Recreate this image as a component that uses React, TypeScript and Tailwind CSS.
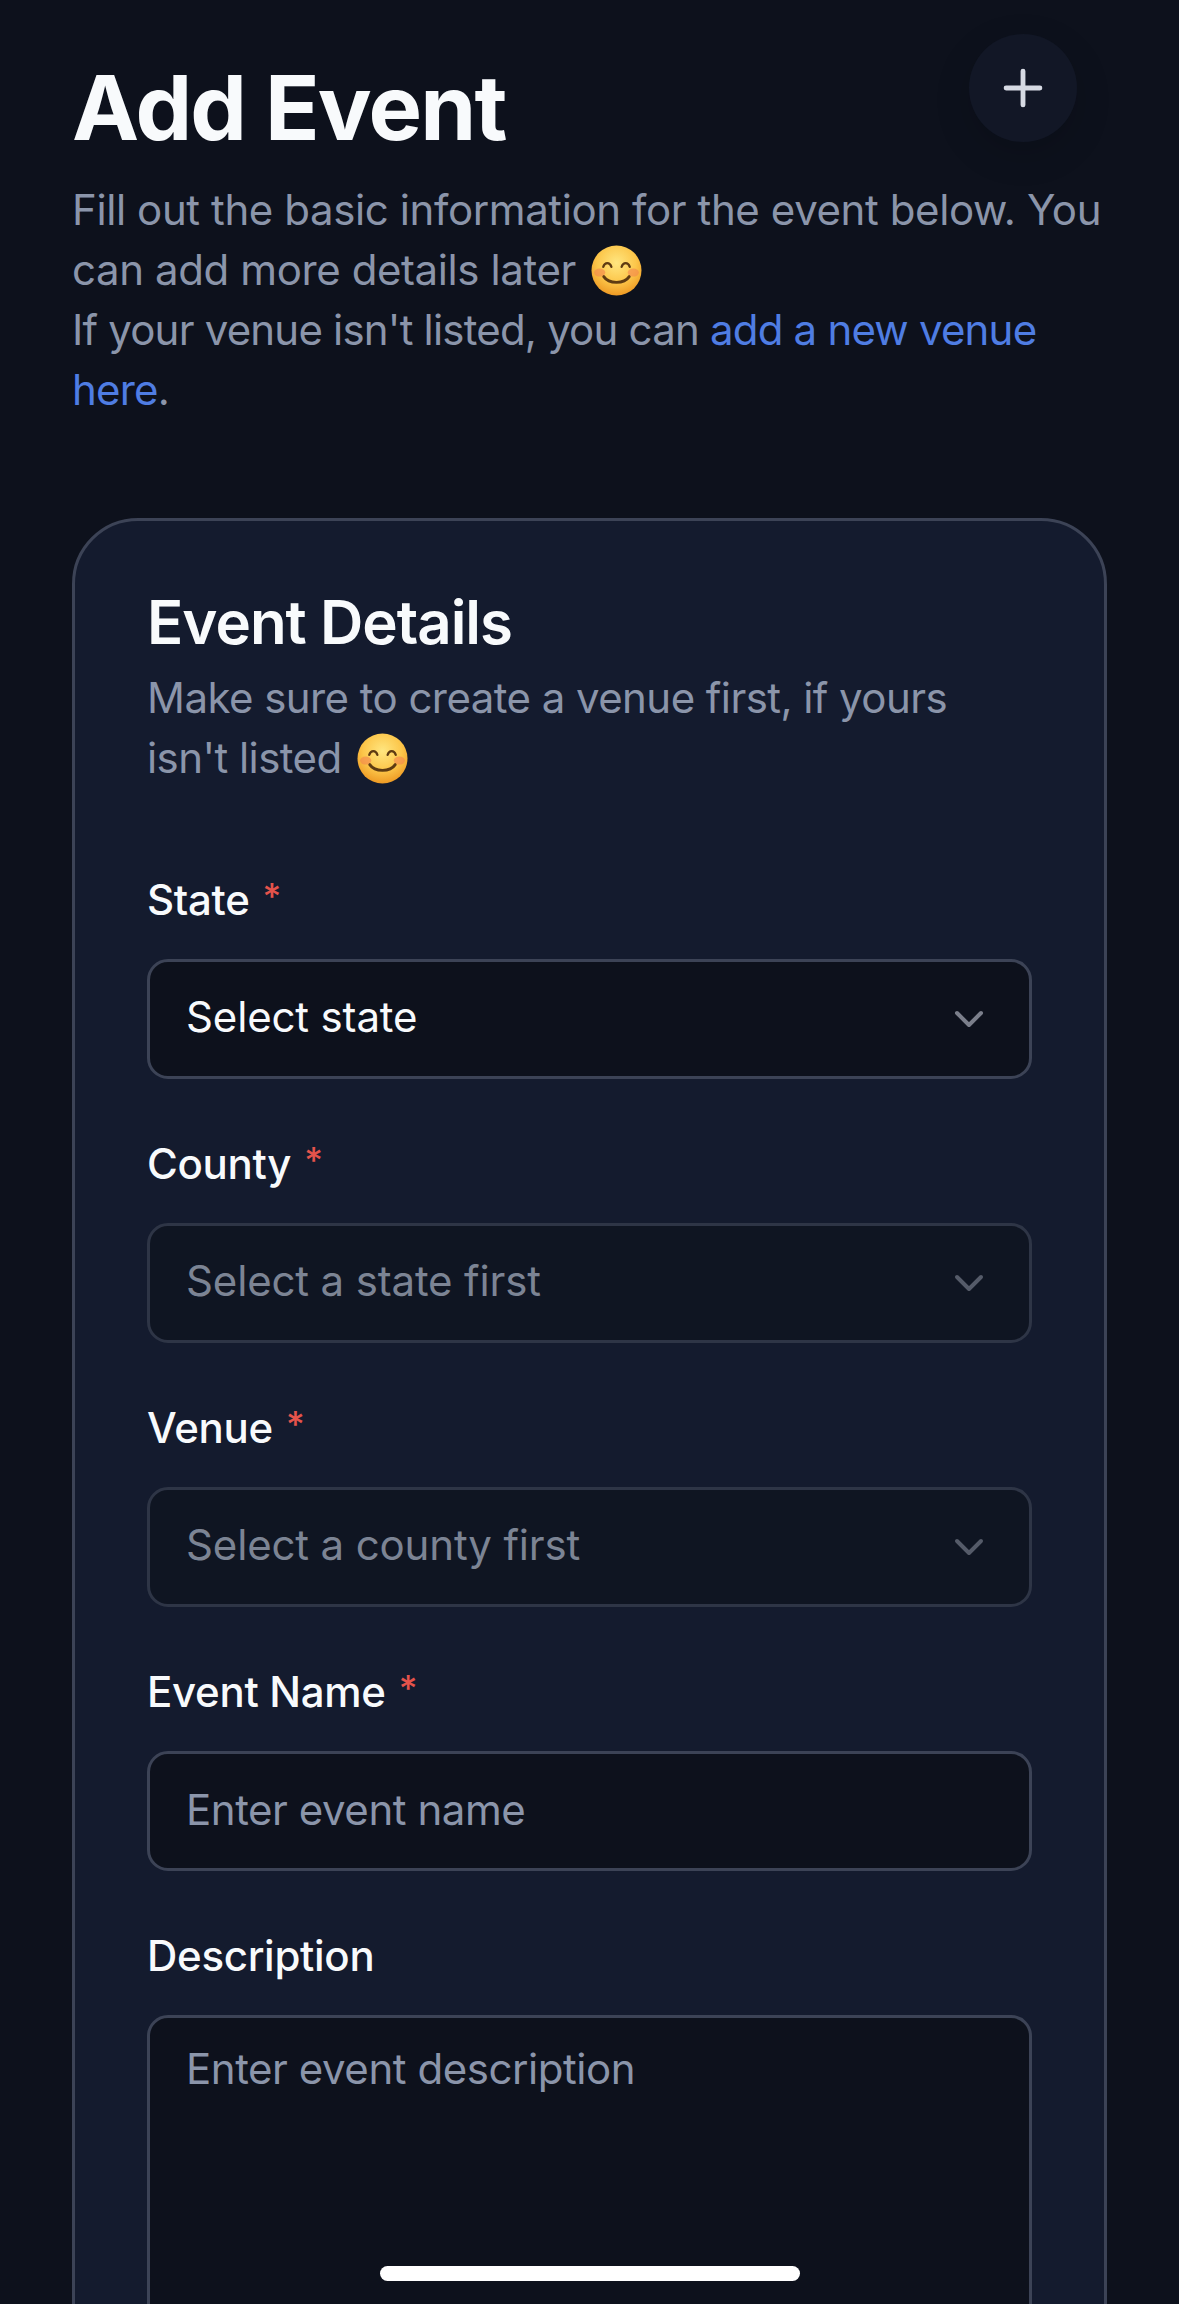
import React from 'react';
import { ChevronDown, Plus } from 'lucide-react';

const Smile: React.FC<{ id: string }> = ({ id }) => (
  <svg viewBox="0 0 50 50" className="ml-[4px] inline-block h-[51px] w-[51px] align-[-11px]">
    <defs>
      <radialGradient id={`${id}-face`} cx="50%" cy="35%" r="65%">
        <stop offset="0%" stopColor="#ffe680" />
        <stop offset="60%" stopColor="#fcc64a" />
        <stop offset="100%" stopColor="#ee9a24" />
      </radialGradient>
    </defs>
    <circle cx="25" cy="25" r="24.5" fill={`url(#${id}-face)`} />
    <ellipse cx="8.500" cy="27" rx="5.500" ry="4" fill="#f4854f" opacity="0.6" />
    <ellipse cx="41.500" cy="27" rx="5.500" ry="4" fill="#f4854f" opacity="0.6" />
    <path d="M12 21.500c1.500-5 6.500-5 8 0M30 21.500c1.500-5 6.500-5 8 0" fill="none" stroke="#5e3b12" strokeWidth="2.200" strokeLinecap="round" />
    <path d="M12.500 31c5 7.500 20 7.500 25 0" fill="none" stroke="#5e3b12" strokeWidth="2.800" strokeLinecap="round" />
  </svg>
);

const Label: React.FC<{ text: string; required?: boolean }> = ({ text, required }) => (
  <label className="block h-[60px] pt-[2px] text-[42px] leading-[60px] font-medium tracking-[-0.3px] text-[#f8fafc]">
    {text}
    {required && <span className="ml-[13px] align-[6px] text-[36px] leading-none text-[#e5534b]">*</span>}
  </label>
);

const SelectField: React.FC<{ label: string; value: string; disabled?: boolean }> = ({ label, value, disabled }) => (
  <div className="flex flex-col gap-[31px]">
    <Label text={label} required />
    <button
      type="button"
      className={`flex h-[120px] w-full items-center justify-between rounded-[21px] border-[3px] px-9 text-[42px] tracking-[-0.15px] ${
        disabled ? 'border-[#2e3546] bg-[#0f1522] text-[#7c8494]' : 'border-[#3c4356] bg-[#0d111c] text-[#f8fafc]'
      }`}
    >
      <span className="pb-[6px]">{value}</span>
      <ChevronDown size={48} className={disabled ? 'text-[#555b69]' : 'text-[#7b7f8b]'} />
    </button>
  </div>
);

export default function App() {
  return (
    <div className="relative h-[2304px] w-[1179px] overflow-hidden bg-[#0d111c] font-['Inter',sans-serif]">
      <div className="px-[72px] pt-[54px]">
        <h1 className="text-[90px] leading-[108px] font-bold tracking-[-1.75px] text-[#f8fafc]">Add Event</h1>
        <p className="mt-[18px] text-[42px] leading-[60px] text-[#8b95aa]">
          <span className="tracking-[-0.4px]">
            Fill out the basic information for the event below. You can add more details later <Smile id="a" />
          </span>
          <br />
          <span className="tracking-[-0.8px]">
            If your venue isn't listed, you can <span className="text-[#4f7de3]">add a new venue here</span>.
          </span>
        </p>

        <div className="mt-[98px] rounded-[66px] border-[3px] border-[#3c4356] bg-[#141b2e] p-[72px]">
          <h2 className="pb-[2px] text-[60px] leading-[58px] font-semibold tracking-[-1px] text-[#f8fafc]">Event Details</h2>
          <p className="mt-[15px] text-[42px] leading-[60px] tracking-[-0.56px] text-[#8b95aa]">
            Make sure to create a venue first, if yours isn't listed <Smile id="b" />
          </p>

          <div className="mt-[80px] flex flex-col gap-[53px]">
            <SelectField label="State" value="Select state" />
            <SelectField label="County" value="Select a state first" disabled />
            <SelectField label="Venue" value="Select a county first" disabled />
            <div className="flex flex-col gap-[31px]">
              <Label text="Event Name" required />
              <input
                placeholder="Enter event name"
                className="h-[120px] w-full rounded-[21px] border-[3px] border-[#3c4356] bg-[#0d111c] px-9 pb-[3px] text-[42px] tracking-[-0.45px] text-[#f8fafc] outline-none placeholder:text-[#8b95aa]"
              />
            </div>
            <div className="flex flex-col gap-[31px]">
              <Label text="Description" />
              <textarea
                placeholder="Enter event description"
                className="h-[360px] w-full resize-none rounded-[21px] border-[3px] border-[#3c4356] bg-[#0d111c] px-9 pt-[21px] pb-6 text-[42px] leading-[60px] tracking-[-0.45px] text-[#f8fafc] outline-none placeholder:text-[#8b95aa]"
              />
            </div>
          </div>
        </div>
      </div>

      <button
        type="button"
        className="absolute top-[34px] left-[969px] flex h-[108px] w-[108px] items-center justify-center rounded-full bg-[#121726] text-[#d6dae3] shadow-[0_12px_36px_rgba(0,0,0,0.15)]"
      >
        <Plus size={58} strokeWidth={2} />
      </button>

      <div className="absolute top-[2266px] left-[380px] h-[15px] w-[420px] rounded-full bg-white" />
    </div>
  );
}
